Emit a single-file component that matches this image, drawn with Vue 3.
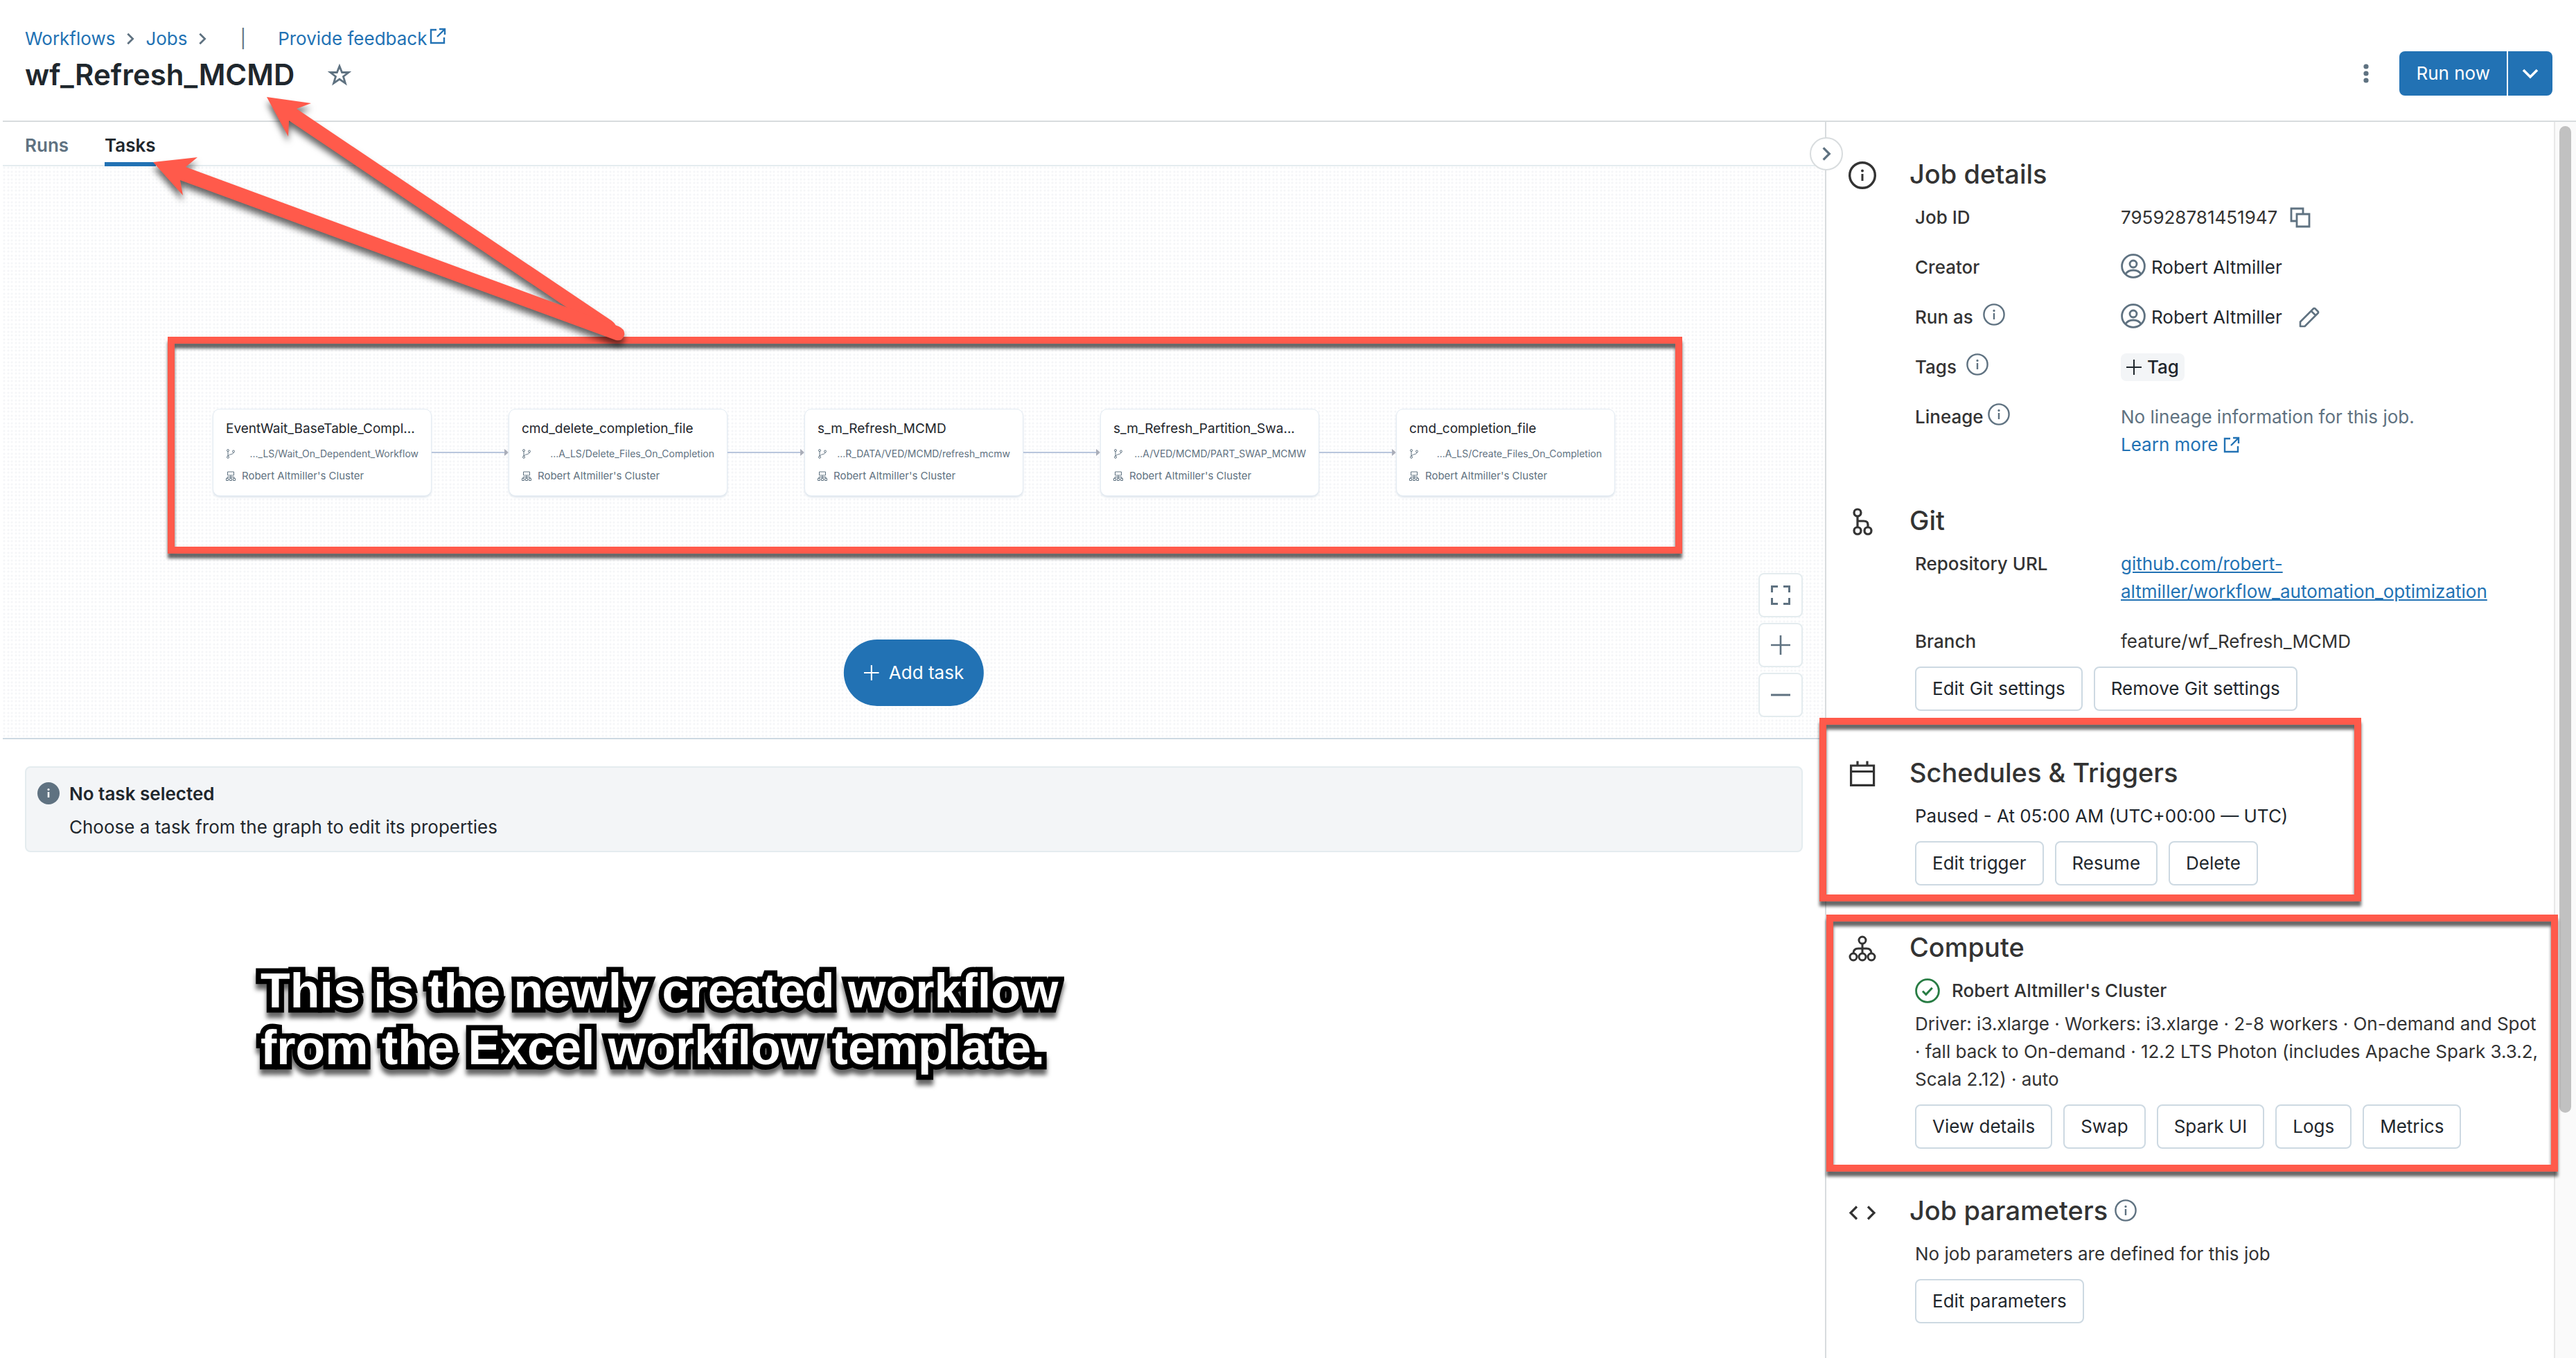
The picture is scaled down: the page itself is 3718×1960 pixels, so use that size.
<script setup>
const tasks = [
  { name: 'EventWait_BaseTable_Compl...', path: '..._LS/Wait_On_Dependent_Workflow' },
  { name: 'cmd_delete_completion_file', path: '...A_LS/Delete_Files_On_Completion' },
  { name: 's_m_Refresh_MCMD', path: '...R_DATA/VED/MCMD/refresh_mcmw' },
  { name: 's_m_Refresh_Partition_Swa...', path: '...A/VED/MCMD/PART_SWAP_MCMW' },
  { name: 'cmd_completion_file', path: '...A_LS/Create_Files_On_Completion' }
]
const cluster = "Robert Altmiller's Cluster"
const gitActions = ['Edit Git settings', 'Remove Git settings']
const triggerActions = ['Edit trigger', 'Resume', 'Delete']
const computeActions = ['View details', 'Swap', 'Spark UI', 'Logs', 'Metrics']
</script>

<template>
  <div class="page">
    <svg class="sprite" aria-hidden="true">
      <symbol id="i-info" viewBox="0 0 32 32">
        <circle cx="16" cy="16" r="14.6" fill="none" stroke="currentColor" stroke-width="2.4" />
        <path d="M16 14v9" stroke="currentColor" stroke-width="2.4" />
        <circle cx="16" cy="10.4" r="1.6" fill="currentColor" />
      </symbol>
      <symbol id="i-chevron" viewBox="0 0 16 24">
        <path d="M4 4l8 8-8 8" fill="none" stroke="currentColor" stroke-width="3" />
      </symbol>
      <symbol id="i-external" viewBox="0 0 24 24">
        <path d="M10 3H2v19h19v-8M14 2h8v8M22 2L11 13" fill="none" stroke="currentColor" stroke-width="2.4" />
      </symbol>
      <symbol id="i-user" viewBox="0 0 36 36">
        <circle cx="18" cy="18" r="16.4" fill="none" stroke="currentColor" stroke-width="2.8" />
        <circle cx="18" cy="15" r="5" fill="none" stroke="currentColor" stroke-width="2.8" />
        <path d="M7 29.500c2-3.500 6-5.500 11-5.500s9 2 11 5.500" fill="none" stroke="currentColor" stroke-width="2.8" />
      </symbol>
      <symbol id="i-plus" viewBox="0 0 28 28">
        <path d="M14 0v28M0 14h28" stroke="currentColor" stroke-width="2.600" />
      </symbol>
    </svg>

    <header class="topbar">
      <div class="heading">
        <nav class="crumbs" aria-label="Breadcrumb">
          <a href="#">Workflows</a>
          <svg class="crumb-sep"><use href="#i-chevron" /></svg>
          <a href="#">Jobs</a>
          <svg class="crumb-sep"><use href="#i-chevron" /></svg>
          <span class="pipe">|</span>
          <a href="#" class="feedback">Provide feedback<svg class="ext"><use href="#i-external" /></svg></a>
        </nav>
        <div class="title-row">
          <h1>wf_Refresh_MCMD</h1>
          <button class="bare" aria-label="Favorite">
            <svg class="star" viewBox="0 0 34 32"><path d="M17 3.500l3.600 9h9.600l-7.700 6 2.900 9.600L17 22.300l-8.400 5.800 2.900-9.600-7.700-6h9.600z" fill="none" stroke="currentColor" stroke-width="2.800" /></svg>
          </button>
        </div>
      </div>
      <div class="actions">
        <button class="bare" aria-label="More actions">
          <svg class="kebab" viewBox="0 0 8 28"><circle cx="4" cy="4" r="3.600" /><circle cx="4" cy="14" r="3.600" /><circle cx="4" cy="24" r="3.600" /></svg>
        </button>
        <div class="split">
          <button class="run">Run now</button>
          <button class="run-menu" aria-label="Run options">
            <svg viewBox="0 0 24 16"><path d="M2 3l10 10L22 3" fill="none" stroke="currentColor" stroke-width="3.600" /></svg>
          </button>
        </div>
      </div>
    </header>

    <div class="body">
      <main class="main">
        <nav class="tabs" aria-label="Job views">
          <a href="#">Runs</a>
          <a href="#" class="active" aria-current="page">Tasks</a>
        </nav>

        <section class="canvas">
          <div class="graph">
            <template v-for="(task, i) in tasks" :key="task.name">
              <svg v-if="i" class="edge" viewBox="0 0 112 12">
                <path d="M0 6h106" stroke="#b9c6dc" stroke-width="2" />
                <path d="M106 1l6 5-6 5z" fill="#a9adb8" />
              </svg>
              <article class="node">
                <h2>{{ task.name }}</h2>
                <p class="node-path">
                  <svg viewBox="0 0 14 14"><g fill="none" stroke="currentColor"><circle cx="3" cy="2.200" r="1.500" /><circle cx="3" cy="11.800" r="1.500" /><circle cx="11" cy="3.500" r="1.500" /><path d="M3 4v6M11 5c0 3-5 2-8 5" /></g></svg>
                  <span>{{ task.path }}</span>
                </p>
                <p class="node-cluster">
                  <svg viewBox="0 0 14 14"><g fill="none" stroke="currentColor"><path d="M2.500 1h9v5h-9zM7 6v3M2 11V8.500h10V11M7 8.500V11" /><path d="M.5 10.500h3v3h-3zM5.500 10.500h3v3h-3zM10.500 10.500h3v3h-3z" /></g></svg>
                  <span>{{ cluster }}</span>
                </p>
              </article>
            </template>
            <div class="mark mark-graph"></div>
          </div>

          <button class="add-task"><svg><use href="#i-plus" /></svg>Add task</button>

          <div class="zoom">
            <button aria-label="Fit to screen">
              <svg viewBox="0 0 28 28"><path d="M1.500 10V1.500H10M18 1.500h8.500V10M26.500 18v8.500H18M10 26.500H1.500V18" fill="none" stroke="currentColor" stroke-width="3" /></svg>
            </button>
            <button aria-label="Zoom in"><svg><use href="#i-plus" /></svg></button>
            <button aria-label="Zoom out"><svg viewBox="0 0 28 28"><path d="M0 14h28" stroke="currentColor" stroke-width="3" /></svg></button>
          </div>
        </section>

        <section class="notice">
          <svg viewBox="0 0 32 32"><circle cx="16" cy="16" r="16" fill="#5f7281" /><path d="M16 14v8" stroke="#fff" stroke-width="2.600" /><circle cx="16" cy="10.500" r="1.600" fill="#fff" /></svg>
          <div>
            <strong>No task selected</strong>
            <p>Choose a task from the graph to edit its properties</p>
          </div>
        </section>

        <p class="caption">This is the newly created workflow<br />from the Excel workflow template.</p>
      </main>

      <aside class="side">
        <button class="collapse" aria-label="Collapse panel"><svg><use href="#i-chevron" /></svg></button>

        <section class="block">
          <svg class="lead" viewBox="0 0 40 40"><circle cx="20" cy="20" r="18.300" fill="none" stroke="currentColor" stroke-width="3.400" /><path d="M20 18v10" stroke="currentColor" stroke-width="3" /><circle cx="20" cy="13.500" r="2" fill="currentColor" /></svg>
          <h2>Job details</h2>
          <dl class="fields">
            <dt>Job ID</dt>
            <dd>795928781451947
              <button class="bare copy" aria-label="Copy job ID"><svg viewBox="0 0 30 30"><path d="M10 20H2V2h17v8M10 10h18v18H10z" fill="none" stroke="currentColor" stroke-width="2.800" /></svg></button>
            </dd>
            <dt>Creator</dt>
            <dd class="dark"><svg class="user"><use href="#i-user" /></svg>Robert Altmiller</dd>
            <dt>Run as<svg class="hint"><use href="#i-info" /></svg></dt>
            <dd class="dark"><svg class="user"><use href="#i-user" /></svg>Robert Altmiller
              <button class="bare edit" aria-label="Edit run as"><svg viewBox="0 0 30 30"><path d="M2 28v-6.500L21.500 2h1.500l5 5v1.500L8.500 28zM18 6l6 6" fill="none" stroke="currentColor" stroke-width="2.600" stroke-linejoin="round" /></svg></button>
            </dd>
            <dt>Tags<svg class="hint"><use href="#i-info" /></svg></dt>
            <dd><button class="tag"><svg><use href="#i-plus" /></svg>Tag</button></dd>
            <dt>Lineage<svg class="hint near"><use href="#i-info" /></svg></dt>
            <dd class="lineage">
              <p>No lineage information for this job.</p>
              <a href="#">Learn more<svg class="ext"><use href="#i-external" /></svg></a>
            </dd>
          </dl>
        </section>

        <section class="block">
          <svg class="lead" viewBox="0 0 40 40"><g fill="none" stroke="currentColor" stroke-width="3.200"><circle cx="13" cy="7" r="5" /><circle cx="13" cy="33" r="5" /><circle cx="28" cy="33" r="5" /><path d="M13 12v16M13 19h9c4 0 6 2 6 5v4" /></g></svg>
          <h2>Git</h2>
          <dl class="fields">
            <dt>Repository URL</dt>
            <dd><a href="#" class="repo">github.com/robert-<br />altmiller/workflow_automation_optimization</a></dd>
            <dt>Branch</dt>
            <dd>feature/wf_Refresh_MCMD</dd>
          </dl>
          <div class="buttons"><button v-for="label in gitActions" :key="label">{{ label }}</button></div>
        </section>

        <section class="block">
          <svg class="lead" viewBox="0 0 40 40"><path d="M3.600 8h33v28.400h-33zM3.600 16.500h33M13 1.500V8M27 1.500V8" fill="none" stroke="currentColor" stroke-width="3.200" /></svg>
          <h2>Schedules &amp; Triggers</h2>
          <p class="dark">Paused - At 05:00 AM (UTC+00:00 — UTC)</p>
          <div class="buttons"><button v-for="label in triggerActions" :key="label">{{ label }}</button></div>
          <div class="mark mark-schedule"></div>
        </section>

        <section class="block">
          <svg class="lead" viewBox="0 0 40 40"><g fill="none" stroke="currentColor" stroke-width="3"><circle cx="20" cy="8" r="5" /><circle cx="7" cy="32" r="5" /><circle cx="20" cy="32" r="5" /><circle cx="33" cy="32" r="5" /><path d="M20 13v14M7 27c0-5 3-7 7-7h12c4 0 7 2 7 7" /></g></svg>
          <h2>Compute</h2>
          <p class="cluster">
            <svg viewBox="0 0 36 36"><circle cx="18" cy="18" r="16.400" fill="none" stroke="currentColor" stroke-width="2.800" /><path d="M11 18.500l4.800 4.800 9-9.600" fill="none" stroke="currentColor" stroke-width="3" /></svg>
            {{ cluster }}
          </p>
          <p>Driver: i3.xlarge · Workers: i3.xlarge · 2-8 workers · On-demand and Spot<br />· fall back to On-demand · 12.2 LTS Photon (includes Apache Spark 3.3.2,<br />Scala 2.12) · auto</p>
          <div class="buttons"><button v-for="label in computeActions" :key="label">{{ label }}</button></div>
          <div class="mark mark-compute"></div>
        </section>

        <section class="block">
          <svg class="lead" viewBox="0 0 40 40"><path d="M12 12.500L3 21.500l9 9M28 12.500l9 9-9 9" fill="none" stroke="currentColor" stroke-width="3.200" /></svg>
          <h2>Job parameters<svg class="hint"><use href="#i-info" /></svg></h2>
          <p>No job parameters are defined for this job</p>
          <div class="buttons"><button>Edit parameters</button></div>
        </section>
      </aside>

      <div class="track"><div class="thumb"></div></div>
    </div>

    <svg class="arrows" viewBox="0 0 940 520" aria-hidden="true">
      <path d="M385 140L449 149 428 157 883 463Q893 471 888 479 881 487 872 480L417 174 416 197Z" />
      <path d="M221 234L285 227 268 241 893 471Q903 476 901 484 898 493 889 491L260 260 264 282Z" />
    </svg>
  </div>
</template>

<style>
body {
  background: #fff;
}
</style>

<style scoped>
* {
  box-sizing: border-box;
}
.page {
  position: relative;
  display: flex;
  flex-direction: column;
  min-height: 100vh;
  padding-left: 4px;
  font: 400 26px/40px Inter, "Liberation Sans", sans-serif;
  color: #333;
}
h1, h2, p, dl, dd {
  margin: 0;
  font-weight: 400;
}
a {
  color: #2272b4;
  text-decoration: none;
}
svg {
  display: block;
  flex: none;
}
button {
  font: inherit;
  color: #1f272d;
  background: #fff;
  border: 2px solid #cdd9e2;
  border-radius: 8px;
  padding: 0;
}
.bare {
  border: 0;
  background: none;
  color: #5f7281;
}
.sprite {
  position: absolute;
  width: 0;
  height: 0;
}
.dark {
  color: #1f272d;
}

.topbar {
  display: flex;
  justify-content: space-between;
  height: 176px;
  padding: 36px 34px 0 32px;
  border-bottom: 2px solid #d8dcde;
}
.crumbs {
  display: flex;
  align-items: center;
}
.crumb-sep {
  width: 16px;
  height: 22px;
  margin: 0 14px;
  color: #5f7281;
}
.pipe {
  margin: 0 46px 0 32px;
  color: #5f7281;
}
.feedback {
  display: flex;
}
.ext {
  width: 24px;
  height: 24px;
}
.feedback .ext {
  margin: 4px 0 0 4px;
}
.title-row {
  display: flex;
  align-items: center;
  gap: 48px;
  color: #1f272d;
}
h1 {
  font-size: 42px;
  line-height: 64px;
  font-weight: 600;
}
.star {
  width: 34px;
  height: 32px;
}
.actions {
  display: flex;
  align-items: flex-start;
  gap: 44px;
  padding-top: 38px;
}
.kebab {
  width: 8px;
  height: 64px;
  fill: #5f7281;
}
.split {
  display: flex;
  gap: 2px;
}
.split button {
  height: 64px;
  border: 0;
  color: #fff;
  background: #2272b4;
}
.split .run {
  padding: 0 24px;
  border-radius: 8px 0 0 8px;
}
.split .run-menu {
  padding: 0 20px;
  border-radius: 0 8px 8px 0;
}
.run-menu svg {
  width: 24px;
  height: 16px;
}

.body {
  display: flex;
  flex: 1;
}
.main {
  flex: 1;
}
.tabs {
  display: flex;
  gap: 52px;
  height: 64px;
  padding: 14px 32px 0;
  border-bottom: 2px solid #e4ecef;
}
.tabs a {
  height: 50px;
  font-weight: 600;
  color: #5f7281;
}
.tabs .active {
  color: #1f272d;
  border-bottom: 6px solid #2272b4;
}

.canvas {
  position: relative;
  display: flex;
  align-items: center;
  justify-content: center;
  height: 827px;
  border-bottom: 2px solid #cdd9e2;
  background-image:
    radial-gradient(circle at 2px 2px, #f5f6f8 1px, transparent 2px),
    radial-gradient(circle at 8px 2px, #f5f6f8 1px, transparent 2px),
    radial-gradient(circle at 2px 8px, #f5f6f8 1px, transparent 2px),
    radial-gradient(circle at 8px 8px, #f5f6f8 1px, transparent 2px);
  background-size: 11px 11px;
}
.graph {
  position: relative;
  display: flex;
  align-items: center;
}
.node {
  width: 316px;
  height: 126px;
  padding: 15px 18px;
  background: #fff;
  border: 1px solid #e4ecf3;
  border-radius: 10px;
  box-shadow: 0 2px 3px #dfe6ed;
  color: #5f7281;
  font-size: 14px;
  line-height: 32px;
}
.node h2 {
  font-size: 19px;
  line-height: 26px;
  color: #1f272d;
  white-space: nowrap;
}
.node p {
  display: flex;
  align-items: center;
  white-space: nowrap;
}
.node p svg {
  width: 14px;
  height: 14px;
}
.node-path {
  justify-content: space-between;
  margin-top: 7px;
}
.node-cluster {
  gap: 9px;
  font-size: 15px;
}
.edge {
  width: 111px;
  height: 12px;
}
.add-task {
  position: absolute;
  bottom: 46px;
  left: 50%;
  transform: translateX(-50%);
  display: flex;
  align-items: center;
  gap: 14px;
  height: 96px;
  padding: 0 29px;
  border: 0;
  border-radius: 48px;
  color: #fff;
  background: #2272b4;
}
.add-task svg {
  width: 22px;
  height: 22px;
}
.zoom {
  position: absolute;
  right: 32px;
  bottom: 30px;
  display: flex;
  flex-direction: column;
  gap: 8px;
}
.zoom button {
  display: grid;
  place-items: center;
  width: 64px;
  height: 64px;
  border-color: #e4ecef;
  color: #5f7281;
}
.zoom svg {
  width: 28px;
  height: 28px;
}

.notice {
  display: flex;
  gap: 14px;
  margin: 39px 32px 0;
  padding: 18px 16px 14px 16px;
  background: #f3f5f7;
  border: 2px solid #e4ecef;
  border-radius: 8px;
  color: #1f272d;
}
.notice svg {
  width: 32px;
  height: 32px;
  margin-top: 3px;
}
.notice strong {
  font-weight: 600;
}
.notice p {
  margin-top: 8px;
}
.caption {
  margin: 159px 0 0 372px;
  font: 700 70px/82px "Liberation Sans", Arial, sans-serif;
  color: #fff;
  -webkit-text-stroke: 15px #000;
  stroke-linejoin: round;
  paint-order: stroke fill;
  filter: drop-shadow(0 8px 3px rgba(0, 0, 0, 0.6));
}

.side {
  position: relative;
  width: 1052px;
  padding: 51px 16px 52px 30px;
  border-left: 2px solid #d8dcde;
  display: flex;
  flex-direction: column;
  gap: 65px;
}
.collapse {
  position: absolute;
  top: 22px;
  left: -24px;
  display: grid;
  place-items: center;
  width: 48px;
  height: 48px;
  border-color: #d8dcde;
  border-radius: 50%;
  color: #5f7281;
}
.collapse svg {
  width: 18px;
  height: 26px;
}
.block {
  position: relative;
  padding-left: 98px;
}
.lead {
  position: absolute;
  top: 6px;
  left: 2px;
  width: 40px;
  height: 40px;
}
.block h2 {
  display: flex;
  align-items: center;
  gap: 10px;
  margin: 0 0 19px -8px;
  font-size: 38px;
  line-height: 48px;
  font-weight: 500;
}
.hint {
  width: 32px;
  height: 32px;
  color: #5f7281;
}
.fields {
  display: grid;
  grid-template-columns: 297px 1fr;
  row-gap: 32px;
}
dt {
  display: flex;
  gap: 14px;
  font-weight: 500;
}
dt .near {
  margin-left: -8px;
}
dd {
  display: flex;
}
.user {
  width: 36px;
  height: 36px;
  margin-right: 8px;
  color: #5f7281;
}
.copy {
  margin-left: 18px;
}
.edit {
  margin-left: 24px;
}
.copy svg, .edit svg {
  width: 30px;
  height: 30px;
}
.tag {
  display: flex;
  align-items: center;
  gap: 8px;
  padding: 0 8px;
  border: 0;
  background: #f3f5f7;
  font-weight: 500;
}
.tag svg {
  width: 22px;
  height: 22px;
}
.lineage {
  flex-direction: column;
  color: #5f7281;
}
.lineage a {
  display: flex;
  align-items: center;
  gap: 8px;
}
.repo {
  text-decoration: underline;
}
.buttons {
  display: flex;
  gap: 16px;
  margin-top: 16px;
}
.buttons button {
  height: 64px;
  padding: 0 23px;
}
.cluster {
  display: flex;
  align-items: center;
  gap: 17px;
  margin-bottom: 8px;
  font-weight: 500;
}
.cluster svg {
  width: 36px;
  height: 36px;
  color: #277c43;
}

.track {
  width: 32px;
  padding: 6px 6px 0;
  border-left: 2px solid #e8e8e8;
  background: #fafafa;
}
.thumb {
  width: 17px;
  height: 1424px;
  border-radius: 9px;
  background: #c1c1c1;
}

.mark {
  position: absolute;
  border: 10px solid #ff5a4b;
  filter: drop-shadow(0 7px 2px rgba(0, 0, 0, 0.6));
  pointer-events: none;
}
.mark-graph {
  inset: -104px -97px -83px -65px;
}
.mark-schedule {
  top: -55px;
  bottom: -23px;
  left: -40px;
  width: 782px;
}
.mark-compute {
  top: -23px;
  right: -22px;
  bottom: -33px;
  left: -30px;
}
.arrows {
  position: absolute;
  top: 0;
  left: 0;
  width: 940px;
  height: 520px;
  fill: #ff5a4b;
  filter: drop-shadow(0 8px 5px rgba(0, 0, 0, 0.6));
  pointer-events: none;
}
</style>
